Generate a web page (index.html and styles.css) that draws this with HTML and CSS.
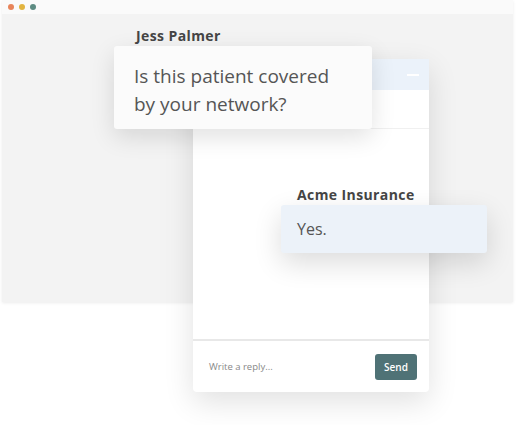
FILE: index.html
```html
<!DOCTYPE html>
<html lang="en">
<head>
    <meta charset="UTF-8">
    <title>Chat</title>
    <link rel="stylesheet" href="styles.css">
</head>
<body>
    <div class="stage">
        <div class="window">
            <div class="window-bar">
                <span class="dot dot-red"></span>
                <span class="dot dot-yellow"></span>
                <span class="dot dot-green"></span>
            </div>
            <div class="window-body"></div>
        </div>

        <div class="chat">
            <div class="chat-header">
                <span class="minimize"></span>
            </div>
            <div class="chat-top"></div>
            <div class="chat-messages"></div>
            <div class="chat-footer">
                <span class="reply">Write a reply...</span>
                <button class="send">Send</button>
            </div>
        </div>

        <div class="message message-left">
            <div class="author">Jess Palmer</div>
            <div class="bubble bubble-white">Is this patient covered<br>by your network?</div>
        </div>

        <div class="message message-right">
            <div class="author">Acme Insurance</div>
            <div class="bubble bubble-blue">Yes.</div>
        </div>
    </div>
</body>
</html>
```

FILE: styles.css
```css
body {
    margin: 0;
    padding: 0;
    background: #fff;
    font-family: 'Open Sans', 'Lato', sans-serif;
}

.stage {
    position: relative;
    width: 523px;
    height: 425px;
    overflow: hidden;
}

.window {
    position: absolute;
    left: 2px;
    top: 0;
    width: 511px;
    height: 302px;
    display: flex;
    flex-direction: column;
    box-shadow: 0 1px 3px rgba(0, 0, 0, 0.08);
}

.window-bar {
    height: 14px;
    background: #fafafa;
    display: flex;
    align-items: center;
    gap: 5px;
    padding-left: 6px;
}

.dot {
    width: 6px;
    height: 6px;
    border-radius: 50%;
}

.dot-red { background: #e8845a; }
.dot-yellow { background: #e2b440; }
.dot-green { background: #5d8b82; }

.window-body {
    flex: 1;
    background: #f3f3f3;
}

.chat {
    position: absolute;
    left: 193px;
    top: 59px;
    width: 236px;
    height: 333px;
    background: #fff;
    border-radius: 0 0 4px 4px;
    display: flex;
    flex-direction: column;
    box-shadow: 0 10px 30px rgba(0, 0, 0, 0.12);
}

.chat-header {
    height: 31px;
    background: #ebf2fa;
    display: flex;
    justify-content: flex-end;
    align-items: center;
    padding-right: 10px;
}

.minimize {
    width: 12px;
    height: 2px;
    background: #fff;
}

.chat-top {
    height: 38px;
    border-bottom: 1px solid #f0f0f0;
}

.chat-messages {
    flex: 1;
    border-bottom: 2px solid #e8e8e8;
}

.chat-footer {
    height: 51px;
    display: flex;
    align-items: center;
    justify-content: space-between;
    padding: 0 12px 0 16px;
}

.reply {
    font-size: 9.5px;
    color: #888;
}

.send {
    background: #4f7276;
    color: #fff;
    border: none;
    border-radius: 3px;
    font-family: inherit;
    font-size: 10px;
    font-weight: 600;
    width: 42px;
    height: 26px;
    padding: 0;
}

.message {
    position: absolute;
}

.message-left {
    left: 114px;
    top: 25px;
}

.message-right {
    left: 281px;
    top: 184px;
}

.author {
    font-size: 14px;
    font-weight: 700;
    letter-spacing: 0.4px;
    color: #444;
    height: 21px;
    line-height: 21px;
    padding-left: 22px;
}

.message-right .author {
    padding-left: 16px;
}

.bubble {
    border-radius: 3px;
    color: #555;
}

.bubble-white {
    width: 258px;
    height: 83px;
    box-sizing: border-box;
    padding: 16px 20px;
    background: #fbfbfb;
    font-size: 19px;
    line-height: 28px;
    box-shadow: 0 8px 24px rgba(0, 0, 0, 0.12);
}

.bubble-blue {
    width: 206px;
    height: 48px;
    box-sizing: border-box;
    padding: 12px 16px;
    background: #ecf2f9;
    font-size: 16px;
    line-height: 24px;
    box-shadow: 0 10px 28px rgba(0, 0, 0, 0.14);
}
```
